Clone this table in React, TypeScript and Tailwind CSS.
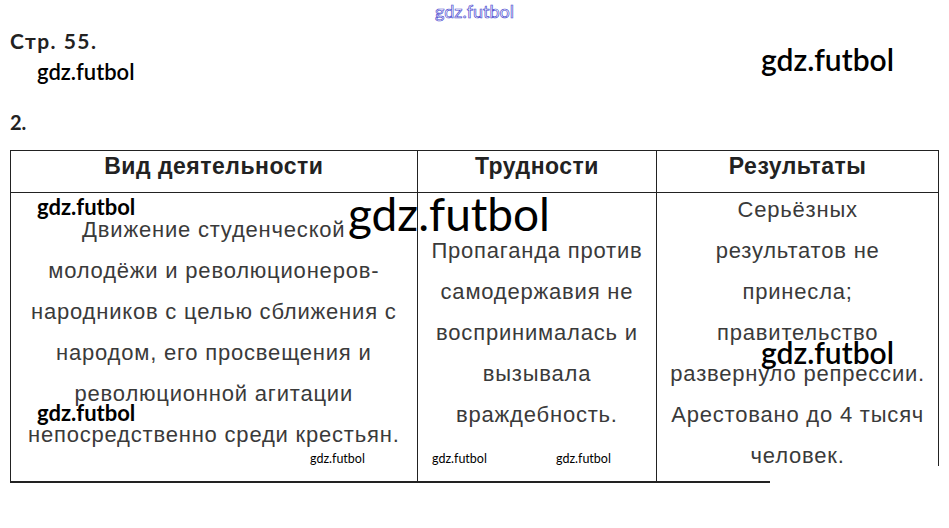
const lato = "font-['Lato','Liberation_Sans',sans-serif]";
const cellFont = "font-['Liberation_Sans','Arial',sans-serif]";

const rows = {
  activity: [
    'Движение студенческой',
    'молодёжи и революционеров-',
    'народников с целью сближения с',
    'народом, его просвещения и',
    'революционной агитации',
    'непосредственно среди крестьян.',
  ],
  trouble: [
    'Пропаганда против',
    'самодержавия не',
    'воспринималась и',
    'вызывала',
    'враждебность.',
  ],
  result: [
    'Серьёзных',
    'результатов не',
    'принесла;',
    'правительство',
    'развернуло репрессии.',
    'Арестовано до 4 тысяч',
    'человек.',
  ],
};

const Lines = ({ items }: { items: string[] }) => (
  <div className="flex flex-col items-center pb-[10px]">
    {items.map((t, i) => (
      <div key={i} className="leading-[41px] whitespace-nowrap">
        {t}
      </div>
    ))}
  </div>
);

export default function App() {
  return (
    <div className="relative w-[949px] h-[528px] bg-white text-black overflow-hidden">
      {/* top outlined watermark */}
      <div
        className={`absolute left-[435px] top-[0px] text-[18px] leading-[22px] ${lato} text-transparent [-webkit-text-stroke:0.7px_#4a4ad0]`}
      >
        gdz.futbol
      </div>

      <div className="pt-[28px] pl-[10px]">
        <div className={`${lato} font-bold text-[21px] tracking-[1.5px] leading-[26px] text-[#222]`}>Стр. 55.</div>
        <div className={`${lato} font-semibold text-[22px] leading-[26px] pl-[27px] pt-[5px]`}>gdz.futbol</div>
        <div className={`${lato} font-bold text-[20px] leading-[24px] text-[#222] pt-[25px]`}>2.</div>
      </div>

      <div className="ml-[10px] mt-[16px] w-[929px]">
        <div
          className={`flex border-t border-l border-b border-[#222] ${cellFont} font-bold text-[23px] tracking-[0.5px] text-[#222]`}
        >
          <div className="w-[407px] h-[41px] pb-[10px] flex items-center justify-center border-r border-[#222]">
            Вид деятельности
          </div>
          <div className="w-[240px] h-[41px] pb-[10px] flex items-center justify-center border-r border-[#222]">
            Трудности
          </div>
          <div className="w-[282px] h-[41px] pb-[10px] flex items-center justify-center border-r border-[#222]">
            Результаты
          </div>
        </div>
        <div className={`flex border-l border-[#222] ${cellFont} text-[22px] tracking-[0.8px] text-[#3a3a3a]`}>
          <div className="w-[407px] h-[288px] flex items-center justify-center border-r border-[#222]">
            <Lines items={rows.activity} />
          </div>
          <div className="w-[240px] h-[288px] flex items-center justify-center border-r border-[#222]">
            <Lines items={rows.trouble} />
          </div>
          <div className="w-[282px] h-[288px] flex">
            <div className="flex-1 flex items-center justify-center">
              <Lines items={rows.result} />
            </div>
            <div className="w-px h-[273px] bg-[#222]" />
          </div>
        </div>
        <div className="w-[760px] h-[2px] bg-[#222]" />
      </div>

      {/* watermarks */}
      <div className={`absolute left-[761px] top-[37px] ${lato} font-semibold text-[30px]`}>gdz.futbol</div>
      <div className={`absolute left-[348px] top-[186px] ${lato} text-[46px] leading-[56px]`}>gdz.futbol</div>
      <div className={`absolute left-[37px] top-[190px] ${lato} font-bold text-[22px]`}>gdz.futbol</div>
      <div className={`absolute left-[761px] top-[330px] ${lato} font-semibold text-[30px]`}>gdz.futbol</div>
      <div className={`absolute left-[37px] top-[396px] ${lato} font-bold text-[22px]`}>gdz.futbol</div>
      <div className={`absolute left-[310px] top-[450px] ${lato} text-[12.5px]`}>gdz.futbol</div>
      <div className={`absolute left-[432px] top-[450px] ${lato} text-[12.5px]`}>gdz.futbol</div>
      <div className={`absolute left-[556px] top-[450px] ${lato} text-[12.5px]`}>gdz.futbol</div>
    </div>
  );
}
